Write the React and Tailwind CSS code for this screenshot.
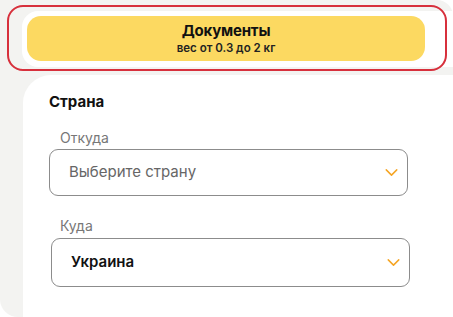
import { ChevronDown } from 'lucide-react';

function Select({ value, placeholder, className }) {
    return (
        <div className={`flex items-center justify-between rounded-[9px] border border-[#8c8c8c] bg-white pl-[19px] pr-[5px] ${className}`}>
            {value ? (
                <span className="text-[15px] font-semibold text-[#111]">{value}</span>
            ) : (
                <span className="text-[15px] text-[#666]">{placeholder}</span>
            )}
            <ChevronDown size={21} strokeWidth={1.7} className="text-[#f5a524]" />
        </div>
    );
}

export default function App() {
    return (
        <div className="w-[453px] h-[317px] overflow-hidden bg-white" style={{ fontFamily: 'Inter, "Noto Sans", sans-serif' }}>
            <div className="relative h-full bg-[#f3f3f1] rounded-bl-[18px] rounded-tr-[16px] pt-[11px]">
                {/* Карточка с выбранным типом */}
                <div className="ml-[22px] h-[56px] rounded-l-[16px] bg-white pl-[5px] pt-[5px]">
                    <div className="flex h-[45px] w-[398px] flex-col items-center justify-center rounded-[14px] bg-[#fcd961] text-[#111]">
                        <span className="text-[15px] font-bold leading-[18px] tracking-[-0.2px]">Документы</span>
                        <span className="mt-[1px] text-[11.5px] font-semibold leading-[14px] text-[#222]">вес от 0.3 до 2 кг</span>
                    </div>
                </div>

                {/* Красная обводка */}
                <div className="absolute left-[7px] top-[5px] h-[66px] w-[440px] rounded-[16px] border-2 border-[#d7303c]" />

                {/* Страна */}
                <div className="mt-[8px] ml-[23px] h-[250px] rounded-tl-[28px] bg-white pl-[26px] pt-[17px]">
                    <h2 className="text-[15px] font-bold leading-[20px] text-[#111]">Страна</h2>

                    <p className="mt-[17px] ml-[11px] text-[14px] leading-[18px] text-[#777]">Откуда</p>
                    <Select placeholder="Выберите страну" className="mt-[2px] h-[47px] w-[359px]" />

                    <p className="mt-[21px] ml-[11px] text-[14px] leading-[18px] text-[#777]">Куда</p>
                    <Select value="Украина" className="mt-[3px] ml-[2px] h-[49px] w-[359px]" />
                </div>
            </div>
        </div>
    );
}
